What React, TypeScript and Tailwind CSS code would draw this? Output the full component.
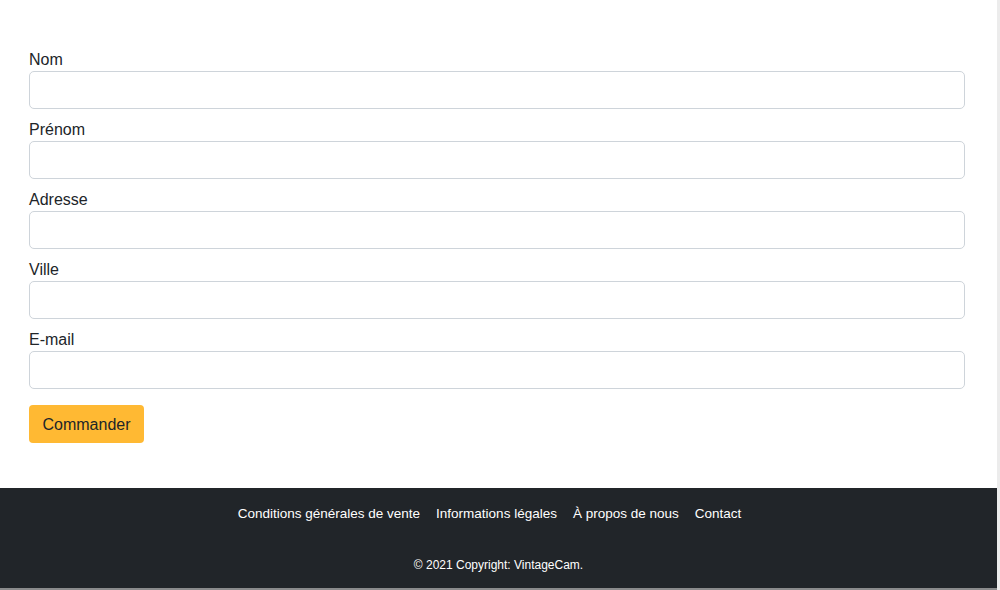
import React from "react";

const fields = ["Nom", "Prénom", "Adresse", "Ville", "E-mail"];

export default function App() {
  return (
    <div
      className="flex h-[590px] w-[1000px] overflow-hidden bg-white"
      style={{ fontFamily: '"Liberation Sans", Arial, sans-serif' }}
    >
      <div className="flex w-[997px] flex-col">
        <main className="h-[488px] pl-[29px] pt-[47px]">
          <div className="flex w-[936px] flex-col">
            {fields.map((f) => (
              <div key={f} className="mb-[8px] flex flex-col">
                <label className="mb-0 pt-[1px] text-[16px] leading-[23px] text-[#212529]">{f}</label>
                <input
                  type="text"
                  className="h-[38px] w-full rounded-[5px] border border-[#ced4da] bg-white px-3 outline-none"
                />
              </div>
            ))}
            <div className="pt-[8px]">
              <button className="h-[38px] w-[115px] rounded-[4px] bg-[#ffb933] pt-[2px] text-[16px] text-[#212529]">
                Commander
              </button>
            </div>
          </div>
        </main>
        <footer className="flex h-[100px] flex-col items-center bg-[#212529] text-white">
          <nav className="mt-[18px] flex gap-[16px] pr-[18px] text-[13.5px] leading-[16px]">
            <span>Conditions générales de vente</span>
            <span>Informations légales</span>
            <span>À propos de nous</span>
            <span>Contact</span>
          </nav>
          <div className="mt-[36px] text-[12px] leading-[14px]">© 2021 Copyright: VintageCam.</div>
        </footer>
        <div className="h-[2px] bg-[#8a8b8c]" />
      </div>
      <div className="w-[3px] bg-[#ececec]" />
    </div>
  );
}
